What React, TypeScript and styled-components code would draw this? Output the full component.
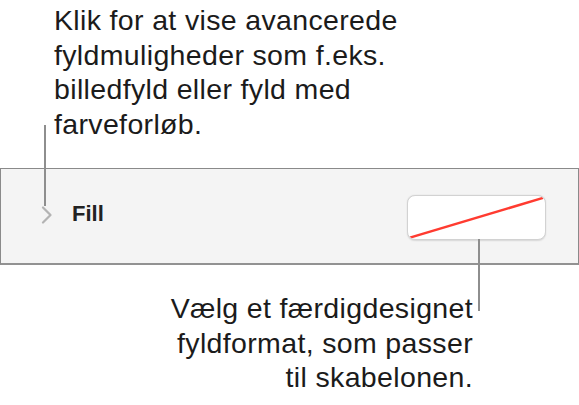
import React from "react";
import styled, { createGlobalStyle } from "styled-components";

const GlobalStyle = createGlobalStyle`
  html, body {
    margin: 0;
    padding: 0;
    background: #ffffff;
  }
  body {
    font-family: "Liberation Sans", Arial, Helvetica, sans-serif;
    color: #1b1b1b;
    -webkit-font-smoothing: antialiased;
  }
`;

const Page = styled.div`
  position: relative;
  width: 579px;
  height: 405px;
  overflow: hidden;
  display: flex;
  flex-direction: column;
`;

const Callout = styled.p<{ $align: "left" | "right" }>`
  margin: 0;
  font-size: 28.5px;
  line-height: 34.5px;
  letter-spacing: 0.35px;
  text-align: ${(p) => p.$align};
  white-space: nowrap;
`;

const TopCallout = styled(Callout)`
  padding: 3px 0 0 54px;
`;

const BottomCallout = styled(Callout)`
  padding: 26px 106px 0 0;
`;

const Leader = styled.div<{ $x: number; $top: number; $height: number }>`
  position: absolute;
  left: ${(p) => p.$x}px;
  top: ${(p) => p.$top}px;
  width: 2px;
  height: ${(p) => p.$height}px;
  background: #8e8e8e;
  z-index: 2;
`;

const Panel = styled.section`
  margin-top: 27px;
  height: 94px;
  box-sizing: content-box;
  border: 1px solid #8a8a8a;
  border-bottom: 2px solid #929292;
  background: #f4f4f4;
  display: flex;
  align-items: center;
  padding: 0 32px 0 40px;
`;

const Disclosure = styled.svg`
  width: 12px;
  height: 18px;
  flex: none;
  margin-top: -2px;
`;

const SectionTitle = styled.span`
  margin-left: 19px;
  font-size: 22px;
  font-weight: 700;
  color: #222222;
  margin-top: -5px;
`;

const Spacer = styled.div`
  flex: 1;
`;

const Swatch = styled.button`
  width: 139px;
  height: 45px;
  padding: 0;
  border: 1px solid #d2d2d2;
  border-radius: 8px;
  background: #ffffff;
  box-shadow: 0 0.5px 1.5px rgba(0, 0, 0, 0.12);
  overflow: hidden;
  display: block;
  margin-top: 3px;

  svg {
    display: block;
    width: 100%;
    height: 100%;
  }
`;

export default function App() {
  return (
    <>
      <GlobalStyle />
      <Page>
        <TopCallout $align="left">
          Klik for at vise avancerede
          <br />
          fyldmuligheder som f.eks.
          <br />
          billedfyld eller fyld med
          <br />
          farveforløb.
        </TopCallout>

        <Panel>
          <Disclosure viewBox="0 0 12 18">
            <polyline
              points="2,1.5 9.5,9 2,16.5"
              fill="none"
              stroke="#b3b3b3"
              strokeWidth="2.2"
              strokeLinecap="round"
              strokeLinejoin="round"
            />
          </Disclosure>
          <SectionTitle>Fill</SectionTitle>
          <Spacer />
          <Swatch type="button" aria-label="Fill">
            <svg viewBox="0 0 139 45" preserveAspectRatio="none">
              <line
                x1="2"
                y1="43.5"
                x2="137"
                y2="2"
                stroke="#ff3b30"
                strokeWidth="2.6"
              />
            </svg>
          </Swatch>
        </Panel>

        <BottomCallout $align="right">
          Vælg et færdigdesignet
          <br />
          fyldformat, som passer
          <br />
          til skabelonen.
        </BottomCallout>

        <Leader $x={44} $top={125} $height={81} />
        <Leader $x={478} $top={239} $height={72} />
      </Page>
    </>
  );
}
